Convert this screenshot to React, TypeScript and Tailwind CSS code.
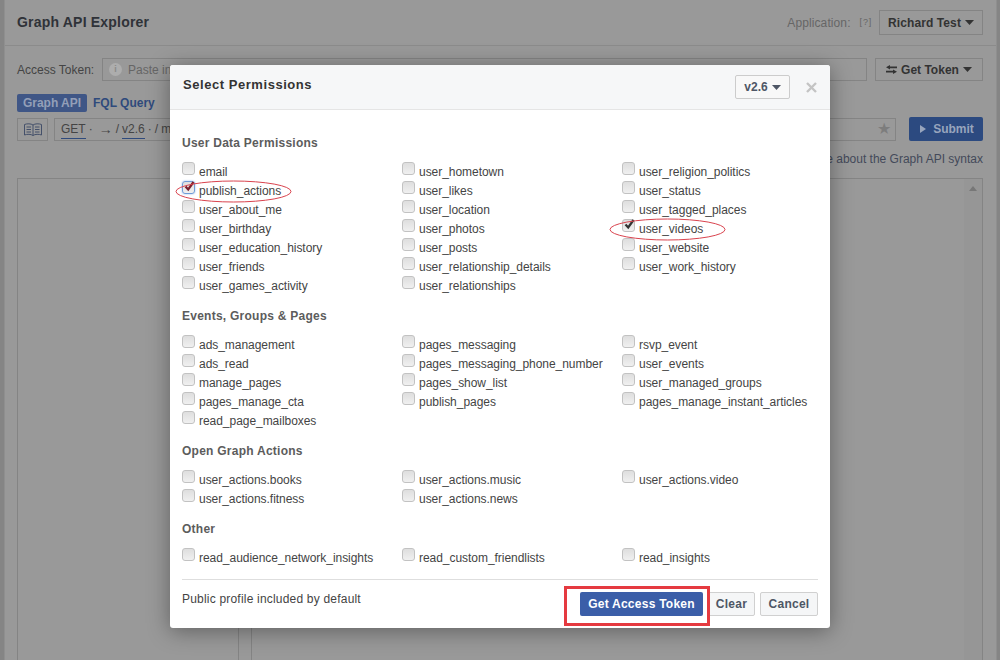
import React from "react";

const font = "font-['Liberation_Sans',Arial,sans-serif]";

function Caret({ color = "#555" }: { color?: string }) {
  return (
    <svg width="9" height="5" viewBox="0 0 9 5" className="shrink-0">
      <path d="M0 0H9L4.5 5Z" fill={color} />
    </svg>
  );
}

function Check({ name, checked, focus }: { name: string; checked?: boolean; focus?: boolean }) {
  return (
    <div className="flex h-[19px] items-center">
      <span
        className={
          "relative mb-[6px] block h-[13px] w-[13px] shrink-0 rounded-[3px] border bg-gradient-to-b from-[#dedede] to-[#f0f0f0] " +
          (focus ? "border-[#6f9bd6] shadow-[0_0_2px_#8ab0e6]" : "border-[#c2c2c2]")
        }
      >
        {checked && (
          <svg width="14" height="13" viewBox="0 0 14 13" className="absolute -top-[2px] left-0">
            <path d="M2.5 6.5L5.2 9.5L10.5 2" fill="none" stroke={focus ? "#7a1f2c" : "#333"} strokeWidth="2.2" />
          </svg>
        )}
      </span>
      <span className="ml-[4px] text-[12px] tracking-[-0.04px] text-[#444]">{name}</span>
    </div>
  );
}

function Section({ title, rows, mt }: { title: string; rows: string[][]; mt: string }) {
  return (
    <section className={mt}>
      <h3 className="h-[17px] text-[12px] leading-[17px] font-bold tracking-[0.25px] text-[#5c5c5c]">{title}</h3>
      <div className="mt-[10px] grid grid-cols-[220px_220px_1fr]">
        {rows.flat().map((n, i) =>
          n === "" ? (
            <div key={i} />
          ) : (
            <Check key={i} name={n} checked={n === "publish_actions" || n === "user_videos"} focus={n === "publish_actions"} />
          ),
        )}
      </div>
    </section>
  );
}

function Background() {
  return (
    <div className="flex h-[660px] w-[1000px] bg-[#8a8a8a] text-[#3a3a3a]">
      <div className="w-[4px] shrink-0 bg-[#858585]" />
      <div className="flex min-w-0 flex-1 flex-col border-l border-[#8f8f8f] bg-[#999999]">
        <div className="flex h-[46px] shrink-0 items-center justify-between border-b border-[#8b8b8b] pr-[13px] pl-[12px]">
          <span className="text-[14px] font-bold tracking-[0.2px] text-[#2f3238]">Graph API Explorer</span>
          <div className="flex items-center">
            <span className="text-[12px] tracking-[0.1px] text-[#666]">Application:</span>
            <span className="ml-[9px] text-[9px] tracking-[0.8px] text-[#666]">[?]</span>
            <div className="ml-[7px] flex h-[25px] w-[104px] items-center justify-center gap-[4px] border border-[#848484] text-[12px] font-bold tracking-[0.1px] text-[#333]">
              Richard Test <Caret color="#333" />
            </div>
          </div>
        </div>
        <div className="flex shrink-0 items-center pt-[12px] pr-[13px] pl-[12px]">
          <span className="w-[85px] text-[12px] text-[#444]">Access Token:</span>
          <div className="flex h-[23px] flex-1 items-center border border-[#848484] pl-[6px] text-[12px] text-[#666]">
            <span className="mr-[6px] flex h-[13px] w-[13px] items-center justify-center rounded-full bg-[#adadad] text-[9px] font-bold text-[#8a8a8a]">i</span>
            Paste in an access token
          </div>
          <div className="ml-[8px] flex h-[23px] w-[108px] items-center justify-center gap-[4px] border border-[#848484] text-[12px] font-bold text-[#333]">
            <svg width="11" height="9" viewBox="0 0 11 9" fill="#333">
              <path d="M4 0V1.5H11V3.2H4V4.6L0 2.3ZM7 4.4L11 6.7L7 9V7.5H0V5.8H7Z" />
            </svg>
            Get Token <Caret color="#333" />
          </div>
        </div>
        <div className="flex shrink-0 items-center pt-[13px] pl-[12px]">
          <span className="flex h-[18px] w-[70px] items-center justify-center rounded-[2px] bg-[#3f5686] text-[12px] font-bold text-[#939fb8]">Graph API</span>
          <span className="ml-[6px] text-[12px] font-bold text-[#2f4a7c]">FQL Query</span>
        </div>
        <div className="flex shrink-0 items-center pt-[5px] pr-[13px] pl-[12px]">
          <div className="flex h-[23px] w-[31px] items-center justify-center border border-[#848484]">
            <svg width="20" height="15" viewBox="0 0 20 15" fill="none" stroke="#44506a" strokeWidth="1">
              <path d="M10 3C8 1.5 4 1.5 1.5 2.5V13C4 12 8 12 10 13.5C12 12 16 12 18.5 13V2.5C16 1.5 12 1.5 10 3V13.5" />
              <path d="M3.5 5H8M3.5 7.5H8M3.5 10H8M12 5H16.5M12 7.5H16.5M12 10H16.5" />
            </svg>
          </div>
          <div className="ml-[6px] flex h-[23px] flex-1 items-center justify-between border border-[#848484] pr-[4px] pl-[6px] text-[12px] text-[#444]">
            <span className="flex items-center">
              <span className="border-b border-[#2f4a7c]">GET</span>
              <span className="ml-[3px]">·</span>
              <span className="ml-[6px] text-[14px] leading-none">→</span>
              <span className="ml-[3px]">/</span>
              <span className="ml-[3px] border-b border-[#2f4a7c]">v2.6</span>
              <span className="ml-[3px]">·</span>
              <span className="ml-[3px]">/ me</span>
            </span>
            <span className="text-[16px] leading-none text-[#7d7d7d]">★</span>
          </div>
          <div className="ml-[13px] flex h-[24px] w-[74px] items-center justify-center gap-[7px] rounded-[2px] bg-[#2c4a80] pl-[2px] text-[12px] font-bold text-[#98a5bd]">
            <svg width="6" height="8" viewBox="0 0 6 8"><path d="M0 0L6 4L0 8Z" fill="#98a5bd" /></svg>
            Submit
          </div>
        </div>
        <div className="shrink-0 pt-[9px] pr-[13px] text-right text-[12px] text-[#444a5a]">Learn more about the Graph API syntax</div>
        <div className="flex min-h-0 flex-1 gap-[12px] pt-[10px] pr-[13px] pl-[12px]">
          <div className="w-[222px] border border-b-0 border-[#848484]" />
          <div className="flex flex-1 justify-end border border-b-0 border-[#848484]">
            <div className="flex w-[18px] justify-center bg-[#969696] pt-[7px]">
              <svg width="8" height="5" viewBox="0 0 8 5"><path d="M4 0L8 5H0Z" fill="#777" /></svg>
            </div>
          </div>
        </div>
      </div>
      <div className="w-[4px] shrink-0 border-l border-[#8f8f8f] bg-[#858585]" />
    </div>
  );
}

function Oval({ className }: { className: string }) {
  return (
    <svg width="117" height="23" viewBox="0 0 117 23" className={"pointer-events-none absolute " + className}>
      <ellipse cx="58.5" cy="11.5" rx="57.5" ry="10.5" fill="none" stroke="#d9434e" strokeWidth="1" />
    </svg>
  );
}

export default function App() {
  return (
    <div className={"relative h-[660px] w-[1000px] overflow-hidden " + font}>
      <Background />
      <div className="absolute top-[65px] left-[170px] flex h-[563px] w-[660px] flex-col rounded-[3px] bg-white shadow-[0_3px_22px_rgba(0,0,0,0.38)]">
        <header className="flex h-[45px] shrink-0 items-center rounded-t-[3px] border-b border-[#e5e5e5] bg-[#f6f7f8] pr-[13px] pl-[13px]">
          <h2 className="mb-[4px] flex-1 text-[13px] font-bold tracking-[0.55px] text-[#333]">Select Permissions</h2>
          <div className="flex h-[24px] w-[55px] items-center justify-center gap-[4px] rounded-[2px] border border-[#ccc] bg-[#f8f8f8] text-[12px] font-bold text-[#4e5665]">
            v2.6 <Caret color="#4e5665" />
          </div>
          <svg width="11" height="11" viewBox="0 0 11 11" className="ml-[16px]">
            <path d="M1 1L10 10M10 1L1 10" stroke="#c4c4c4" strokeWidth="2.4" />
          </svg>
        </header>
        <div className="flex-1 pr-[12px] pl-[12px]">
          <Section
            mt="mt-[25px]"
            title="User Data Permissions"
            rows={[
              ["email", "user_hometown", "user_religion_politics"],
              ["publish_actions", "user_likes", "user_status"],
              ["user_about_me", "user_location", "user_tagged_places"],
              ["user_birthday", "user_photos", "user_videos"],
              ["user_education_history", "user_posts", "user_website"],
              ["user_friends", "user_relationship_details", "user_work_history"],
              ["user_games_activity", "user_relationships", ""],
            ]}
          />
          <Section
            mt="mt-[13px]"
            title="Events, Groups & Pages"
            rows={[
              ["ads_management", "pages_messaging", "rsvp_event"],
              ["ads_read", "pages_messaging_phone_number", "user_events"],
              ["manage_pages", "pages_show_list", "user_managed_groups"],
              ["pages_manage_cta", "publish_pages", "pages_manage_instant_articles"],
              ["read_page_mailboxes", "", ""],
            ]}
          />
          <Section
            mt="mt-[13px]"
            title="Open Graph Actions"
            rows={[
              ["user_actions.books", "user_actions.music", "user_actions.video"],
              ["user_actions.fitness", "user_actions.news", ""],
            ]}
          />
          <Section
            mt="mt-[13px]"
            title="Other"
            rows={[["read_audience_network_insights", "read_custom_friendlists", "read_insights"]]}
          />
        </div>
        <footer className="mx-[12px] flex h-[49px] shrink-0 border-t border-[#dedede]">
          <span className="mt-[10px] text-[12px] tracking-[0.2px] text-[#444]">Public profile included by default</span>
          <div className="mt-[12px] ml-auto flex h-[24px] gap-[5px] text-[12px] font-bold">
            <button className="w-[123px] rounded-[2px] bg-[#3b5ea8] tracking-[0.25px] text-white">Get Access Token</button>
            <button className="w-[47px] rounded-[2px] border border-[#d0d0d0] bg-[#f5f6f7] tracking-[0.25px] text-[#4e5665]">Clear</button>
            <button className="w-[58px] rounded-[2px] border border-[#d0d0d0] bg-[#f5f6f7] tracking-[0.25px] text-[#4e5665]">Cancel</button>
          </div>
        </footer>
      </div>
      <Oval className="top-[180px] left-[175px]" />
      <Oval className="top-[218px] left-[609px]" />
      <div className="pointer-events-none absolute top-[586px] left-[564px] h-[40px] w-[146px] border-[3px] border-[#e53a40]" />
    </div>
  );
}
